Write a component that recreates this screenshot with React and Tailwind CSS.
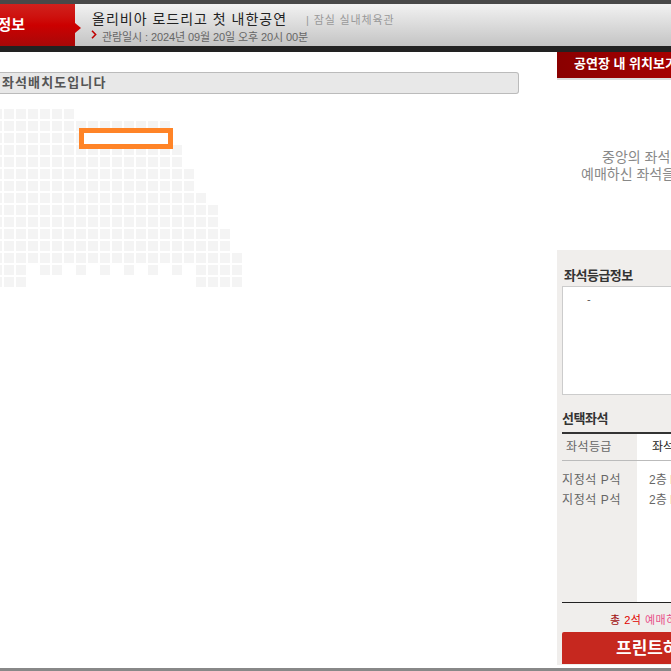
const FONT = "font-['Liberation_Sans','Noto_Sans_CJK_KR',sans-serif]";

// last filled column of each row in the seat block
const ROW_ENDS = [6, 14, 14, 15, 15, 16, 16, 17, 18, 18, 19, 19, 20];
const ROW_13 = [0, 1, 2, 4, 5, 7, 9, 11, 13, 15, 17, 18, 19, 20];
const ROW_14 = [0, 1, 2, 17, 18, 19, 20];

function SeatRow({ cols }) {
  return (
    <div className="grid grid-cols-[repeat(21,10px)] gap-x-[2px] h-[10px]">
      {Array.from({ length: 21 }, (_, i) => (
        <div key={i} className={cols.includes(i) ? "bg-[#f4f4f4]" : ""} />
      ))}
    </div>
  );
}

function SeatMap() {
  const rows = ROW_ENDS.map((end) => Array.from({ length: end + 1 }, (_, i) => i));
  rows.push(ROW_13, ROW_14);
  return (
    <div className="relative ml-[-8px] mt-[15px] flex flex-col gap-[2px] w-[250px]">
      {rows.map((cols, i) => (
        <SeatRow key={i} cols={cols} />
      ))}
      <div className="absolute left-[87px] top-[19px] w-[94px] h-[21px] border-[5px] border-[#ff8427] bg-white" />
    </div>
  );
}

function Header() {
  return (
    <header className="shrink-0">
      <div className="h-[4px] bg-[#484848]" />
      <div className="h-[42px] flex bg-gradient-to-b from-[#f2f2f2] to-[#c4c4c4]">
        <div className="relative w-[75px] shrink-0 bg-gradient-to-b from-[#d0201c] via-[#cc0000] to-[#a80808] flex items-center justify-end pr-[50px]">
          <span className="text-white font-bold text-[15px] whitespace-nowrap">정보</span>
          <span className="absolute right-[-6px] top-[19px] border-y-[5px] border-y-transparent border-l-[6px] border-l-[#cc0000]" />
        </div>
        <div className="pl-[17px] pt-[6px]">
          <div className="flex items-baseline">
            <span className="text-[14px] leading-[18px] text-[#222] tracking-[1px] whitespace-nowrap">올리비아 로드리고 첫 내한공연</span>
            <span className="ml-[19px] text-[11px] text-[#999] tracking-[0.85px] whitespace-nowrap">| 잠실 실내체육관</span>
          </div>
          <div className="flex items-center mt-[1px] text-[11px] leading-[14px] text-[#666] tracking-[-0.1px] whitespace-nowrap">
            <svg width="6" height="9" viewBox="0 0 6 9" className="ml-[-1px] mr-[5px] mt-[-4px] shrink-0">
              <path d="M1 0.8 L4.6 4.5 L1 8.2" fill="none" stroke="#c00000" strokeWidth="1.6" />
            </svg>
            관람일시 : 2024년 09월 20일 오후 20시 00분
          </div>
        </div>
      </div>
      <div className="h-[6px] bg-[#222]" />
    </header>
  );
}

function Sidebar() {
  return (
    <aside className="w-[300px] shrink-0 flex flex-col h-[613px]">
      <div className="h-[198px] bg-white flex flex-col">
        <div className="h-[26px] bg-gradient-to-r from-[#8a0000] to-[#d40000] border-b-[2px] border-[#ddd] box-content text-white font-bold text-[13px] leading-[24px] pl-[17px] whitespace-nowrap">
          공연장 내 위치보기
        </div>
        <div className="mt-[69px] text-[14px] leading-[17px] text-[#888] whitespace-nowrap">
          <div className="pl-[45px]">중앙의 좌석배치도에서</div>
          <div className="pl-[24px]">예매하신 좌석을 확인하세요</div>
        </div>
      </div>
      <div className="flex-1 bg-[#f0eeec] pl-[5px] flex flex-col">
        <h3 className="mt-[17px] pl-[2px] text-[13px] leading-[18px] font-bold text-[#333] tracking-[-0.5px]">좌석등급정보</h3>
        <div className="mt-[1px] h-[109px] bg-white border border-[#ccc] pl-[24px] pt-[5px] text-[11px] leading-[14px] text-[#555]">-</div>
        <h3 className="mt-[15px] text-[13px] leading-[18px] font-bold text-[#333] tracking-[-0.5px]">선택좌석</h3>
        <div className="mt-[4px] h-[2px] bg-[#333]" />
        <div className="ml-[-5px] flex h-[168px]">
          <div className="w-[80px] shrink-0 text-[12px] text-[#666]">
            <div className="h-[27px] border-b border-[#bbb] ml-[5px] leading-[27px] pl-[4px] tracking-[0.4px]">좌석등급</div>
            <div className="mt-[9px] pl-[5px] leading-[20px] tracking-[0.6px]">지정석 P석</div>
            <div className="pl-[5px] leading-[20px] tracking-[0.6px]">지정석 P석</div>
          </div>
          <div className="flex-1 bg-white text-[12px] text-[#666]">
            <div className="h-[27px] border-b border-[#bbb] leading-[27px] pl-[15px] text-[#222]">좌석번호</div>
            <div className="mt-[9px] pl-[12px] leading-[20px]">2층 P구역</div>
            <div className="pl-[12px] leading-[20px]">2층 P구역</div>
          </div>
        </div>
        <div className="h-[1px] bg-[#222]" />
        <div className="mt-[10px] text-[11px] leading-[14px] pl-[48px] whitespace-nowrap text-[#a01010] tracking-[0.5px]">
          총 <span className="text-[#e00000]">2석</span> <span className="text-[#e8508a]">예매하기</span>
        </div>
        <div className="mt-[5px] h-[32px] bg-[#c6281f] rounded-t-[2px] text-white font-bold text-[17px] leading-[34px] pl-[54px] whitespace-nowrap">프린트하기</div>
      </div>
    </aside>
  );
}

export default function App() {
  return (
    <div className={`${FONT} w-[671px] h-[671px] overflow-hidden flex flex-col bg-white`}>
      <Header />
      <div className="flex flex-1 min-h-0">
        <main className="w-[557px] shrink-0">
          <div className="mt-[20px] w-[519px] h-[22px] bg-[#e8e8e8] border border-[#bbb] border-l-0 rounded-r-[3px] pl-[2px] text-[13px] leading-[20px] font-bold text-[#555] tracking-[1.1px]">
            좌석배치도입니다
          </div>
          <SeatMap />
        </main>
        <Sidebar />
      </div>
      <div className="h-[3px] bg-[#888] shrink-0" />
    </div>
  );
}
